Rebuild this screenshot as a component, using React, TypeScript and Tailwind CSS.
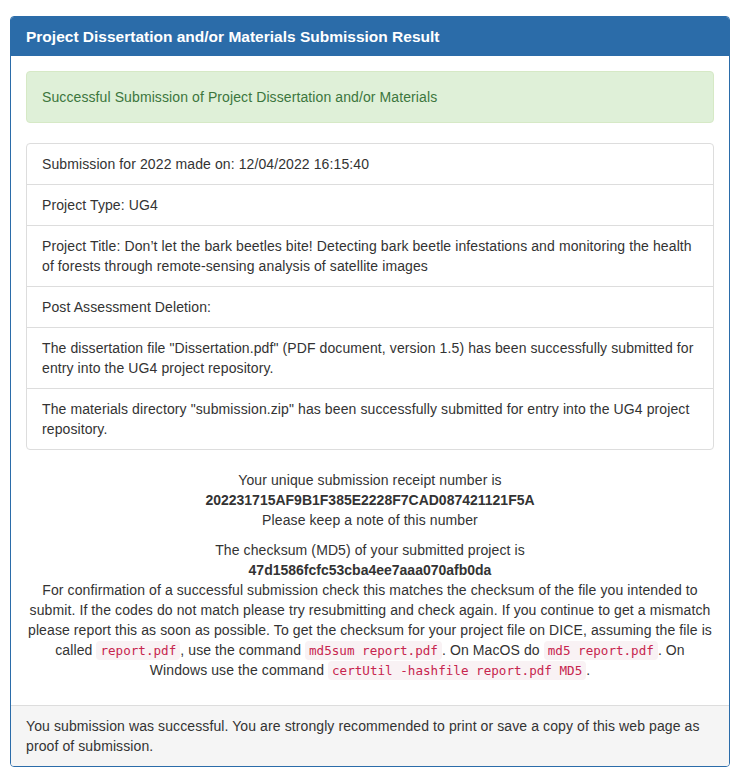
const listItems = [
  'Submission for 2022 made on: 12/04/2022 16:15:40',
  'Project Type: UG4',
  'Project Title: Don\u2019t let the bark beetles bite! Detecting bark beetle infestations and monitoring the health of forests through remote-sensing analysis of satellite images',
  'Post Assessment Deletion:',
  'The dissertation file "Dissertation.pdf" (PDF document, version 1.5) has been successfully submitted for entry into the UG4 project repository.',
  'The materials directory "submission.zip" has been successfully submitted for entry into the UG4 project repository.',
]

function Code({ children }: { children: string }) {
  return (
    <code className="px-[4px] py-[2px] rounded-[4px] bg-[#f9f2f4] text-[#c7254e] text-[12.6px] leading-none tracking-normal font-['DejaVu_Sans_Mono',monospace]">
      {children}
    </code>
  )
}

export default function App() {
  return (
    <div className="bg-white min-h-[780px] pt-[16px] px-[10px] font-['Liberation_Sans',Arial,sans-serif] text-[14px] leading-[20px] text-[#333] tracking-[0.1px]">
      <div className="border border-[#2b6ca9] rounded-[4px] bg-white">
        {/* heading */}
        <div className="bg-[#2b6ca9] text-white px-[15px] py-[10px] rounded-t-[3px]">
          <h3 className="text-[15.5px] leading-[19px] font-bold tracking-normal">
            Project Dissertation and/or Materials Submission Result
          </h3>
        </div>

        <div className="p-[15px]">
          <div className="mb-[20px] p-[15px] border border-[#d6e9c6] rounded-[4px] bg-[#dff0d8] text-[#3c763d]">
            Successful Submission of Project Dissertation and/or Materials
          </div>

          <ul className="mb-[20px]">
            {listItems.map((text, i) => (
              <li
                key={i}
                className={`px-[15px] py-[10px] border border-[#ddd] bg-white ${
                  i > 0 ? '-mt-px' : 'rounded-t-[4px]'
                } ${i === listItems.length - 1 ? 'rounded-b-[4px]' : ''}`}
              >
                {text}
              </li>
            ))}
          </ul>

          <div className="text-center">
            <p className="mb-[10px]">
              Your unique submission receipt number is
              <br />
              <b className="tracking-normal">202231715AF9B1F385E2228F7CAD087421121F5A</b>
              <br />
              Please keep a note of this number
            </p>
            <p className="mb-[10px]">
              The checksum (MD5) of your submitted project is
              <br />
              <b className="tracking-normal">47d1586fcfc53cba4ee7aaa070afb0da</b>
              <br />
              For confirmation of a successful submission check this matches the checksum of the file you
              intended to submit. If the codes do not match please try resubmitting and check again. If you
              continue to get a mismatch please report this as soon as possible. To get the checksum for your
              project file on DICE, assuming the file is called <Code>report.pdf</Code>, use the command{' '}
              <Code>md5sum report.pdf</Code>. On MacOS do <Code>md5 report.pdf</Code>. On Windows use the
              command <Code>certUtil -hashfile report.pdf MD5</Code>.
            </p>
          </div>
        </div>

        {/* footer */}
        <div className="px-[15px] py-[10px] bg-[#f5f5f5] border-t border-[#ddd] rounded-b-[3px]">
          You submission was successful. You are strongly recommended to print or save a copy of this web page
          as proof of submission.
        </div>
      </div>
    </div>
  )
}
